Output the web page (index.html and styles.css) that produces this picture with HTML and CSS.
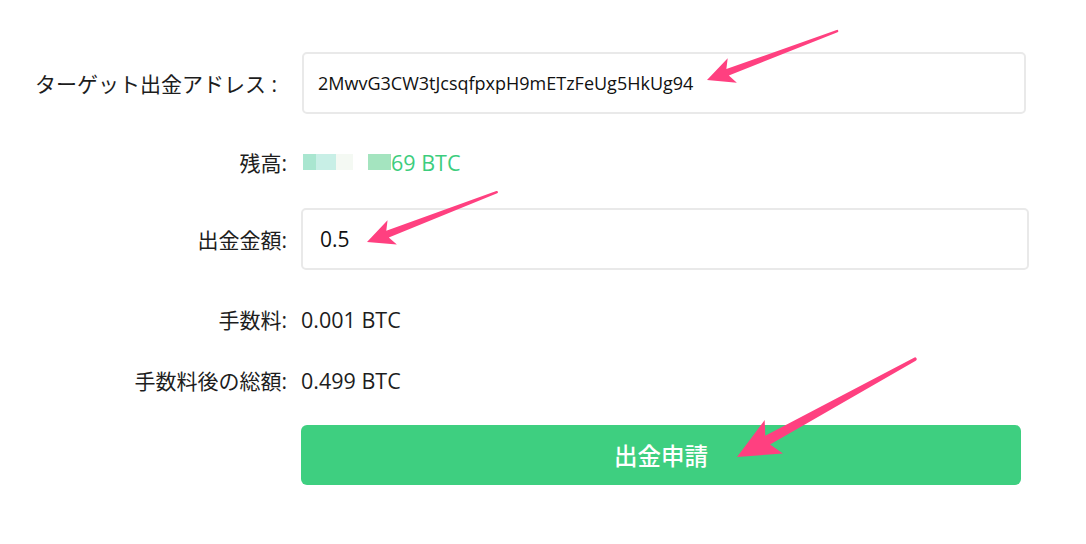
FILE: index.html
```html
<!DOCTYPE html>
<html lang="ja">

<head>
    <meta charset="UTF-8">
    <meta name="viewport" content="width=device-width, initial-scale=1.0">
    <title>出金申請</title>
    <link rel="stylesheet" href="styles.css">
</head>

<body>
    <div class="page">
        <form class="withdraw">
            <div class="row row-address">
                <label class="label" for="address">ターゲット出金アドレス :</label>
                <input class="field" type="text" id="address" value="2MwvG3CW3tJcsqfpxpH9mETzFeUg5HkUg94">
            </div>
            <div class="row row-balance">
                <span class="label">残高:</span>
                <span class="value balance">
                    <span class="blur b1"></span><span class="blur b2"></span><span class="blur b3"></span><span class="gap"></span><span class="blur b4"></span>69 BTC
                </span>
            </div>
            <div class="row row-amount">
                <label class="label" for="amount">出金金額:</label>
                <input class="field field-amount" type="text" id="amount" value="0.5">
            </div>
            <div class="row row-fee">
                <span class="label">手数料:</span>
                <span class="value">0.001 BTC</span>
            </div>
            <div class="row row-total">
                <span class="label">手数料後の総額:</span>
                <span class="value">0.499 BTC</span>
            </div>
            <div class="row row-submit">
                <span class="label"></span>
                <button type="button" class="submit">出金申請</button>
            </div>
        </form>

        <!-- annotation arrows -->
        <svg class="arrows" width="1086" height="544" viewBox="0 0 1086 544">
            <path transform="translate(707,80) rotate(-20.6)" d="M0,0 L27,-13 L22,-3.5 L139,-1.2 A1.2 1.2 0 0 1 139,1.2 L22,3.5 L27,13 Z" />
            <path transform="translate(367,242) rotate(-21)" d="M0,0 L27,-13 L22,-3.5 L139,-1.2 A1.2 1.2 0 0 1 139,1.2 L22,3.5 L27,13 Z" />
            <path transform="translate(737,457) rotate(-28.8)" d="M0,0 L42,-19 L35,-5 L203,-1.8 A1.8 1.8 0 0 1 203,1.8 L35,5 L42,19 Z" />
        </svg>
    </div>
</body>

</html>
```

FILE: styles.css
```css
body {
    margin: 0;
    background: #fff;
    font-family: "Open Sans", "Noto Sans CJK JP", sans-serif;
    color: #1d1d1d;
}

.page {
    position: relative;
    width: 1086px;
    height: 544px;
    overflow: hidden;
}

.withdraw {
    padding-top: 52px;
}

.row {
    display: flex;
    align-items: center;
}

.label {
    width: 301px;
    flex: none;
    padding-right: 14px;
    box-sizing: border-box;
    text-align: right;
    font-size: 21px;
    white-space: nowrap;
}

.row-address .label {
    padding-right: 24px;
}

.value {
    font-size: 21.5px;
}

.field {
    width: 724px;
    height: 62px;
    box-sizing: border-box;
    border: 2px solid #e9e9e9;
    border-radius: 5px;
    padding: 0 14px;
    font-family: "Open Sans", sans-serif;
    font-size: 18px;
    color: #111;
    outline: none;
    margin-left: 1px;
}

.field-amount {
    width: 728px;
    margin-left: 0;
    padding: 0 17px;
    font-size: 21px;
}

.row-balance {
    height: 62px;
    margin-top: 17px;
}

.row-amount {
    margin-top: 15px;
}

.row-fee {
    height: 40px;
    margin-top: 29px;
}

.row-total {
    height: 40px;
    margin-top: 21px;
}

.row-submit {
    margin-top: 25px;
}

.balance {
    color: #3ccd7d;
    display: flex;
    align-items: center;
}

.blur {
    display: inline-block;
    height: 16px;
}

.b1 {
    width: 13px;
    margin-left: 2px;
    background: #a9e6d0;
}

.b2 {
    width: 20px;
    background: #c8efe6;
}

.b3 {
    width: 17px;
    background: #f4f9f3;
}

.gap {
    width: 15px;
}

.b4 {
    width: 23px;
    margin-right: 0;
    background: #a4e4bf;
}

.submit {
    width: 720px;
    height: 60px;
    border: none;
    border-radius: 6px;
    background: #3ecf80;
    color: #fff;
    font-family: "Noto Sans CJK JP", sans-serif;
    font-size: 23.5px;
    font-weight: 500;
    cursor: pointer;
}

.arrows {
    position: absolute;
    left: 0;
    top: 0;
    pointer-events: none;
}

.arrows path {
    fill: #ff4080;
}
```
